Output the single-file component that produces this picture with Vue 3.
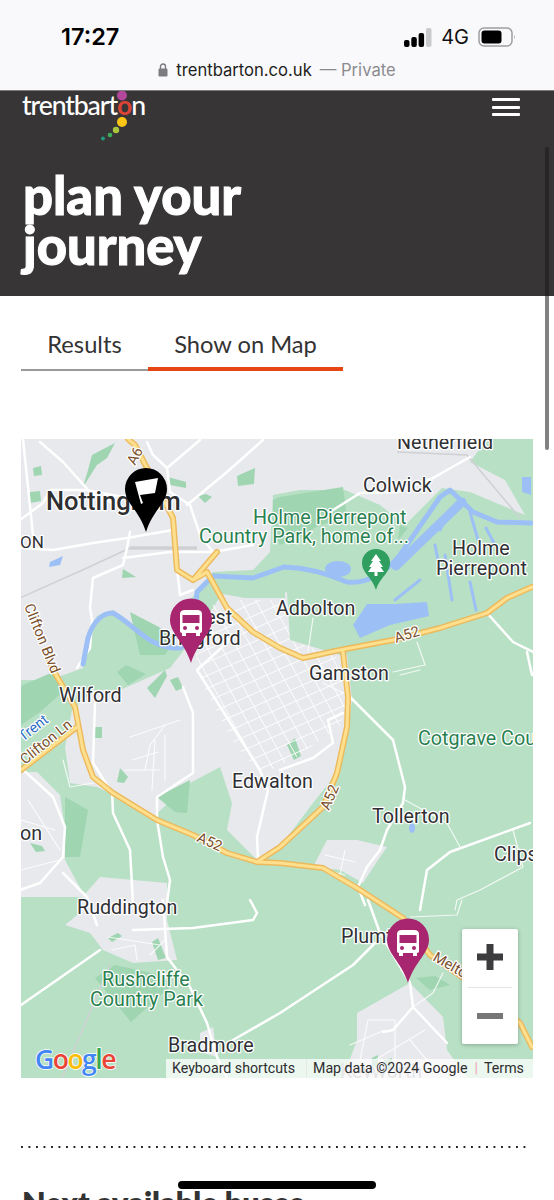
<script setup>
const grays = [
  '21,439 487,439 470,462 505,480 525,515 470,492 442,488 405,525 380,505 345,490 300,490 273,495 270,552 253,570 213,572 190,600 180,648 153,640 133,628 113,610 97,616 88,638 83,668 50,680 21,680',
  '222,594 245,598 287,592 290,640 340,655 347,655 352,700 347,730 337,773 313,803 280,847 257,860 227,830 232,803 220,767 190,783 153,817 110,793 97,787 70,783 65,747 72,710 95,690 120,690 170,668 188,645',
  '21,772 37,772 60,795 65,830 65,860 85,897 21,897',
  '77,915 77,903 100,877 167,883 167,920 177,960 133,963 103,950 90,933 65,925',
  '313,867 327,840 357,840 387,847 380,857 363,883 340,870',
  '357,1013 410,983 443,1017 447,1050 467,1078 343,1078 357,1040',
  '200,1033 213,1027 217,1057 200,1052',
  '21,845 45,852 21,880'
];
const darkGreens = [
  '92,455 115,443 107,458 97,465 83,487 88,470',
  '33,468 41,466 42,475 34,476',
  '30,492 40,491 41,501 30,503',
  '237,476 255,468 254,484 238,486',
  '168,477 186,482 186,488 170,485',
  '198,496 206,494 212,497 205,503',
  '123,569 136,577 122,578',
  '280,497 343,487 347,518 320,525 297,538 280,545 273,530 273,500',
  '400,525 408,528 398,540',
  '130,612 155,625 177,637 165,655 140,655',
  '117,672 126,665 146,674 128,685',
  '147,688 165,670 167,676 155,698',
  '170,680 178,677 183,688 176,691',
  '95,727 102,727 102,738 95,738',
  '117,782 120,768 128,777 124,783',
  '157,797 190,780 187,813 175,812',
  '65,797 88,810 80,857 65,857',
  '30,843 42,846 45,851 36,852',
  '287,745 295,738 301,756 294,760',
  '108,938 118,933 122,936 112,942',
  '152,942 158,938 166,958 158,960',
  '416,978 435,976 450,985 430,990',
  '95,978 115,965 160,975 172,985 131,1022',
  '372,1058 378,1055 378,1068 372,1066',
  '384,1060 392,1058 392,1070 384,1068',
  '21,686 53,672 65,690 40,712 21,725'
];
const lightGreens = [
  '213,580 253,581 285,570 285,598 245,598 225,590',
  '50,760 63,745 68,790 88,802 67,797'
];
const minorRoads = [
  'M23 439L33 535M40 442L63 462L90 492L127 510',
  'M20 520L43 503L50 490H87L127 498M20 548L53 550L93 543L127 538L173 530',
  'M130 532L127 548L123 565L93 578L90 608L92 620L90 648L77 668M123 558L170 552H213L253 545',
  'M147 442L153 455L167 468L170 492L190 505L200 535L213 552M200 440L167 468M263 440L227 472L187 505',
  'M177 568L180 595L193 590M190 625L230 640L197 670L260 770L268 790L257 837L258 860',
  'M183 687L193 713V773L157 797V820L163 857L170 880L167 903',
  'M112 790L113 813L130 850L133 903M95 703L93 763L110 790M63 873L87 897L97 925',
  'M20 767L53 797L65 827L63 857L40 883L20 890',
  'M350 697L393 740L405 787L403 803L387 830L380 850L367 867L358 887L365 905',
  'M343 713L328 720L333 743L313 758L280 770',
  'M530 823L450 852L427 870L420 910',
  'M133 930L193 928L253 920L257 913L250 900M163 900L167 957L190 987L207 1023L217 1057L227 1078',
  'M233 1040L280 1013L353 965L375 943M21 1005L100 950',
  'M368 900L380 933L410 983L413 1007L393 1030L383 1032M413 1007L447 1043',
  'M330 512L360 493L397 492L433 478L470 457',
  'M487 613L513 642L533 652M527 652L532 675'
];
const thinRoads = [
  'M130 737L180 720M145 770L150 745L165 725M152 790L155 740M165 780V735M125 770H160M132 760L158 752',
  'M63 760L70 787L93 783M21 820L55 830M28 800L60 850M21 870L60 860',
  'M405 800L447 823L460 847M513 830L523 867L480 890L457 900L455 910',
  'M323 683L343 693M400 675L420 670M417 642L425 665L393 672M313 618L308 652',
  'M410 917L457 915L462 900M443 973L433 993L413 1007',
  'M325 855L355 862M345 850L340 875M325 870L345 875',
  'M360 1060L368 1020H395L395 1068M375 1060L425 1030M410 1040L435 1070M350 1045L385 1030',
  'M108 937L160 945M112 950L135 945L137 960M150 955L165 940'
];
const gridLines = [];
for (let i = -5; i < 9; i++) {
  const x = 205 + i * 15;
  gridLines.push(`M${x} 590L${x + 110} 790`);
}
for (let i = 0; i < 15; i++) {
  const y = 610 + i * 13;
  gridLines.push(`M170 ${y + 30}L350 ${y - 50}`);
}
const water = [
  'M284 567Q315 568 347 582Q375 585 400 555L440 497L450 490L473 512L497 522L531 523',
  'M83 664L88 638C92 625 100 613 113 613C135 625 150 650 180 648C195 640 196 600 197 592L213 576L253 578L284 567'
];
</script>

<template>
  <div class="phone">
    <header class="ios-bar">
      <div class="status">
        <span class="clock">17:27</span>
        <div class="status-right">
          <svg class="signal" width="28" height="19" viewBox="0 0 28 19" aria-hidden="true">
            <rect x="0" y="12" width="5.500" height="7" rx="2" fill="#000" />
            <rect x="7.300" y="9" width="5.500" height="10" rx="2" fill="#000" />
            <rect x="14.600" y="5" width="5.500" height="14" rx="2" fill="#000" />
            <rect x="22" y="0" width="5.500" height="19" rx="2" fill="#c9cacc" />
          </svg>
          <span class="net">4G</span>
          <svg class="battery" width="38" height="20" viewBox="0 0 38 20" aria-hidden="true">
            <rect x="1" y="1" width="33" height="18" rx="5" fill="none" stroke="#9d9ea1" stroke-width="1.500" />
            <rect x="3.500" y="3.500" width="20" height="13" rx="3" fill="#000" />
            <path d="M36 7.500Q37.500 10 36 12.500Z" fill="#9d9ea1" />
          </svg>
        </div>
      </div>
      <div class="address">
        <svg width="10" height="14" viewBox="0 0 10 14" aria-hidden="true">
          <path d="M2.500 6V3.500a2.500 2.500 0 0 1 5 0V6" fill="none" stroke="#7c7c80" stroke-width="1.400" />
          <rect x="0.500" y="5.500" width="9" height="8" rx="1.300" fill="#7c7c80" />
        </svg>
        <span class="host">trentbarton.co.uk</span>
        <span class="private">— Private</span>
      </div>
    </header>

    <section class="hero">
      <div class="hero-top">
        <div class="logo">
          <span class="logo-word">trentbart<span class="logo-o">o</span>n</span>
          <svg class="logo-dots" width="60" height="58" viewBox="0 0 60 58" aria-hidden="true">
            <circle cx="32" cy="4.500" r="5" fill="#b2479c" />
            <circle cx="32" cy="31" r="5" fill="#fdc614" />
            <circle cx="26" cy="39" r="3.200" fill="#a9c63c" />
            <circle cx="20" cy="44" r="2.300" fill="#3fae5a" />
            <circle cx="13" cy="47.500" r="1.900" fill="#1e9d80" />
          </svg>
        </div>
        <button class="menu" aria-label="Menu"><i></i><i></i><i></i></button>
      </div>
      <h1>plan your<br />journey</h1>
    </section>

    <nav class="tabs">
      <a class="tab">Results</a>
      <a class="tab active">Show on Map</a>
    </nav>

    <section class="map">
      <svg class="map-art" width="512" height="639" viewBox="21 439 512 639">
        <defs>
          <clipPath id="grid-clip">
            <polygon points="200,610 225,600 285,600 290,640 345,660 350,700 340,725 300,755 262,775 235,745 205,690 195,650" />
          </clipPath>
        </defs>
        <rect x="21" y="439" width="512" height="639" fill="#b8e0c5" />
        <polygon v-for="(p, i) in grays" :key="'g' + i" :points="p" fill="#e8e9ed" />
        <polygon v-for="(p, i) in lightGreens" :key="'l' + i" :points="p" fill="#b8e0c5" />
        <polygon v-for="(p, i) in darkGreens" :key="'d' + i" :points="p" fill="#9fd5b1" />

        <g fill="none" stroke="#cfd0d4" stroke-width="1.500">
          <path d="M20 598L87 568L130 548M397 452L467 455L520 518M110 965L62 1078" />
          <path d="M130 548H197" stroke-width="3.500" />
        </g>

        <g fill="none" stroke="#fff" stroke-linecap="round" stroke-linejoin="round">
          <g clip-path="url(#grid-clip)">
            <path v-for="(d, i) in gridLines" :key="'x' + i" :d="d" stroke-width="1" opacity=".9" />
          </g>
          <path v-for="(d, i) in thinRoads" :key="'t' + i" :d="d" stroke-width="1.200" opacity=".8" />
          <path v-for="(d, i) in minorRoads" :key="'m' + i" :d="d" stroke-width="2.500" />
        </g>

        <g fill="none" stroke="#9cc0f5" stroke-linejoin="round" stroke-linecap="round">
          <path v-for="(d, i) in water" :key="'w' + i" :d="d" stroke-width="5" />
          <path d="M396 566L462 502" stroke-width="9" />
          <path d="M449 512L440 530M470 512L478 540M486 528L495 545M435 545L440 570M445 555L452 600M470 582L476 610M395 600L420 580" stroke-width="3" />
        </g>
        <g fill="#9cc0f5">
          <polygon points="353,625 367,604 395,604 427,602 429,616 390,625 360,638" />
          <ellipse cx="338" cy="569" rx="13" ry="8" />
          <polygon points="522,477 531,477 531,495 522,492" />
          <ellipse cx="412" cy="828" rx="3" ry="5" />
          <polygon points="50,562 63,556 60,565 49,567" />
        </g>

        <g fill="none" stroke-linejoin="round" stroke-linecap="round">
          <g stroke="#ecb95c" stroke-width="6">
            <path id="yellow-a" d="M532 587L507 598L487 613L440 628L393 640L340 650L303 658L280 648L253 632L227 608L207 572L193 580L177 570L173 518L135 445L128 439M193 580L217 552" />
            <path id="yellow-b" d="M343 652L348 697L347 727L337 773L323 807L280 847L257 862L227 853L193 835L157 820L113 793L93 777L83 750L75 707L53 670L47 655M77 727L21 770" />
            <path id="yellow-c" d="M257 862L280 863L323 868L357 888L403 918L430 955L462 977L520 1023L532 1047" />
          </g>
          <g stroke="#fddf8d" stroke-width="3.200">
            <use href="#yellow-a" />
            <use href="#yellow-b" />
            <use href="#yellow-c" />
          </g>
        </g>

        <g class="lbl">
          <text x="46" y="510" class="city">Nottingham</text>
          <text x="397" y="449" class="town">Netherfield</text>
          <text x="363" y="492" class="town">Colwick</text>
          <text x="253" y="524" class="park">Holme Pierrepont</text>
          <text x="199" y="543" class="park">Country Park, home of...</text>
          <text x="452" y="555" class="town">Holme</text>
          <text x="436" y="575" class="town">Pierrepont</text>
          <text x="276" y="615" class="town">Adbolton</text>
          <text x="309" y="680" class="town">Gamston</text>
          <text x="20" y="548" class="town small">ON</text>
          <text x="188" y="624" class="town">West</text>
          <text x="159" y="645" class="town">Bridgford</text>
          <text x="59" y="702" class="town">Wilford</text>
          <text x="232" y="788" class="town">Edwalton</text>
          <text x="418" y="745" class="park">Cotgrave Country Park</text>
          <text x="372" y="823" class="town">Tollerton</text>
          <text x="494" y="861" class="town">Clipston</text>
          <text x="20" y="840" class="town">on</text>
          <text x="77" y="914" class="town">Ruddington</text>
          <text x="102" y="986" class="park">Rushcliffe</text>
          <text x="90" y="1006" class="park">Country Park</text>
          <text x="168" y="1052" class="town">Bradmore</text>
          <text x="341" y="943" class="town">Plumtree</text>
          <text x="340" y="1078" class="town faint">Keyworth</text>
          <text class="road" transform="translate(24 606) rotate(68)">Clifton Blvd</text>
          <text class="road" transform="translate(25 765) rotate(-39)">Clifton Ln</text>
          <text class="river" transform="translate(23 742) rotate(-38)">Trent</text>
          <text class="road" transform="translate(135 466) rotate(-62)">A6</text>
          <text class="road" transform="translate(396 643) rotate(-17)">A52</text>
          <text class="road" transform="translate(196 841) rotate(24)">A52</text>
          <text class="road" transform="translate(329 811) rotate(-67)">A52</text>
          <text class="road" transform="translate(432 960) rotate(30)">Melton</text>
        </g>

        <g class="google">
          <text x="35" y="1069"><tspan fill="#4285f4">G</tspan><tspan fill="#ea4335">o</tspan><tspan fill="#fbbc05">o</tspan><tspan fill="#4285f4">g</tspan><tspan fill="#34a853">l</tspan><tspan fill="#ea4335">e</tspan></text>
        </g>

        <!-- tree pin -->
        <path d="M376 590C372 577 362 573 362 563A14 14 0 1 1 390 563C390 573 380 577 376 590Z" fill="#2f9e5e" />
        <path d="M376 554L381 561H379L383 567H380.500L384 572H377.500V576H374.500V572H368L371.500 567H369L373 561H371Z" fill="#fff" />

        <!-- destination pin -->
        <path d="M146 532C139 510 125 503 125 489A21 21 0 1 1 167 489C167 503 153 510 146 532Z" fill="#000" />
        <path d="M135 482L158 478L155 493L140 495L143 503L141 504Z" fill="#fff" />

        <!-- bus pins -->
        <g v-for="(pin, i) in [[191, 598], [408, 918]]" :key="'b' + i" :transform="`translate(${pin[0]} ${pin[1]})`">
          <path d="M0 65C-7 43 -21 36 -21 21.500A21 21 0 1 1 21 21.500C21 36 7 43 0 65Z" fill="#a8256f" />
          <path d="M-11 16Q-11 12 -6 12H6Q11 12 11 16V33Q11 35 9 35V38H5V35H-5V38H-9V35Q-11 35 -11 33Z" fill="#fff" />
          <rect x="-8.500" y="17" width="17" height="8" fill="#a8256f" />
          <circle cx="-6" cy="30" r="2" fill="#a8256f" />
          <circle cx="6" cy="30" r="2" fill="#a8256f" />
        </g>
      </svg>

      <div class="zoom">
        <svg width="26" height="26" viewBox="0 0 26 26" aria-hidden="true"><path d="M0 13H26M13 0V26" stroke="#3c3c3e" stroke-width="7" /></svg>
        <i class="zoom-line"></i>
        <svg width="26" height="26" viewBox="0 0 26 26" aria-hidden="true"><path d="M0 13H26" stroke="#77777a" stroke-width="6" /></svg>
      </div>

      <div class="attrib">
        <span class="kb">Keyboard shortcuts</span>
        <span class="data">Map data ©2024 Google</span>
        <span class="sep">|</span>
        <span class="terms">Terms</span>
      </div>
    </section>

    <section class="next">
      <div class="dots"></div>
      <h2>Next available buses</h2>
    </section>

    <i class="scrollbar"></i>
    <i class="home"></i>
  </div>
</template>

<style>
html, body { margin: 0; background: #fff; }
</style>

<style scoped>
.phone {
  position: relative;
  width: 554px;
  height: 1200px;
  overflow: hidden;
  background: #fff;
  font-family: "Lato", "Noto Sans", sans-serif;
}
.ios-bar {
  height: 91px;
  padding: 0 38px 0 61px;
  box-sizing: border-box;
  background: #f9f9fb;
  font-family: "Inter", "Liberation Sans", sans-serif;
  border-bottom: 1px solid #7d7d7f;
}
.status {
  height: 59px;
  padding-top: 21px;
  box-sizing: border-box;
  display: flex;
  justify-content: space-between;
  align-items: flex-start;
}
.clock { font-size: 23.500px; line-height: 32px; font-weight: 600; color: #000; }
.status-right { display: flex; align-items: center; gap: 9px; height: 32px; }
.net { font-size: 20px; font-weight: 400; color: #111; }
.address {
  display: flex;
  align-items: center;
  justify-content: center;
  gap: 8px;
  height: 24px;
  margin: -1px -38px 0 -61px;
  font-size: 16.600px;
}
.host { color: #1e1e20; }
.private { color: #8b8b8f; }

.hero {
  height: 205px;
  background: #373536;
  color: #fff;
  padding: 0 34px 0 22px;
  box-sizing: border-box;
  overflow: hidden;
}
.hero-top { display: flex; justify-content: space-between; align-items: flex-start; height: 79px; }
.logo { position: relative; width: 125px; height: 50px; }
.logo-word {
  display: block;
  font-size: 26.600px;
  line-height: 28px;
  letter-spacing: -1.100px;
  font-weight: 500;
  color: #fff;
  white-space: nowrap;
}
.logo-o { color: #dc4437; font-weight: 700; }
.logo-dots { position: absolute; left: 68px; top: 0; }
.menu {
  margin-top: 7px;
  padding: 0;
  width: 28px;
  height: 18px;
  border: 0;
  background: none;
  display: flex;
  flex-direction: column;
  justify-content: space-between;
}
.menu i { display: block; height: 3px; border-radius: 1px; background: #fff; }
h1 {
  margin: 0;
  padding-left: 1px;
  font-size: 52.500px;
  line-height: 50px;
  font-weight: 900;
  letter-spacing: 0;
  -webkit-text-stroke: 1px #fff;
  color: #fff;
}

.tabs {
  display: flex;
  margin: 24px 0 0 21px;
  height: 51px;
  font-size: 23.700px;
  color: #333;
}
.tab {
  display: block;
  box-sizing: border-box;
  line-height: 48px;
  height: 51px;
  text-align: center;
  border-bottom: 2px solid #9a9a9a;
}
.tab:first-child { width: 127px; }
.tab.active { width: 195px; border-bottom: 4px solid #e64613; }

.map {
  position: relative;
  width: 512px;
  height: 639px;
  margin: 68px 0 0 21px;
  overflow: hidden;
}
.map-art { display: block; }
.lbl text {
  font-family: "Roboto", "Liberation Sans", sans-serif;
  paint-order: stroke;
  stroke: #fff;
  stroke-width: 2.500px;
  stroke-linejoin: round;
}
.lbl .city { font-size: 25.500px; font-weight: 500; fill: #2e2f31; }
.lbl .town { font-size: 19.700px; fill: #2f3033; }
.lbl .small { font-size: 17px; }
.lbl .park { font-size: 19.700px; fill: #2a8150; }
.lbl .road { font-size: 14.500px; fill: #7a4f2b; }
.lbl .river { font-size: 14.500px; fill: #2b6cc4; }
.lbl .faint { fill: #a0a2a6; stroke: none; }
.google text {
  font-family: "Open Sans", "Liberation Sans", sans-serif;
  font-size: 26.500px;
  font-weight: 600;
  letter-spacing: -1.500px;
  paint-order: stroke;
  stroke: #fff;
  stroke-width: 1.500px;
}

.zoom {
  position: absolute;
  left: 441px;
  top: 490px;
  width: 56px;
  height: 115px;
  background: #fff;
  border-radius: 2px;
  box-shadow: 0 1px 4px rgba(0, 0, 0, .25);
  display: flex;
  flex-direction: column;
  align-items: center;
  padding-top: 15px;
  box-sizing: border-box;
}
.zoom-line { display: block; width: 44px; height: 1px; background: #e4e4e4; margin: 17px 0 15px; }
.zoom svg { display: block; flex: none; }

.attrib {
  position: absolute;
  left: 145px;
  right: 0;
  bottom: 0;
  height: 19px;
  display: flex;
  align-items: center;
  background: rgba(255, 255, 255, .72);
  font-family: "Roboto", "Liberation Sans", sans-serif;
  font-size: 14.200px;
  line-height: 19px;
  color: #2d2d2f;
  white-space: nowrap;
}
.kb { padding-left: 6px; width: 141px; box-sizing: border-box; border-right: 1px solid #e7e7e7; }
.data { margin-left: 6px; }
.sep { margin-left: 7px; color: #f3a4b6; }
.terms { margin-left: 6px; }

.next { margin: 68px 0 0 21px; width: 505px; }
.dots { height: 2px; background-image: radial-gradient(circle at 1px 1px, #222 1px, transparent 1.200px); background-size: 7.500px 2px; }
h2 {
  margin: 37px 0 0 1px;
  font-size: 30.500px;
  line-height: 34px;
  font-weight: 800;
  color: #333;
  white-space: nowrap;
}
.scrollbar {
  position: absolute;
  left: 545px;
  top: 147px;
  width: 4px;
  height: 303px;
  border-radius: 2px;
  background: rgba(25, 25, 25, .55);
}
.home {
  position: absolute;
  left: 178px;
  top: 1181px;
  width: 198px;
  height: 8px;
  border-radius: 4px;
  background: #000;
}
</style>
